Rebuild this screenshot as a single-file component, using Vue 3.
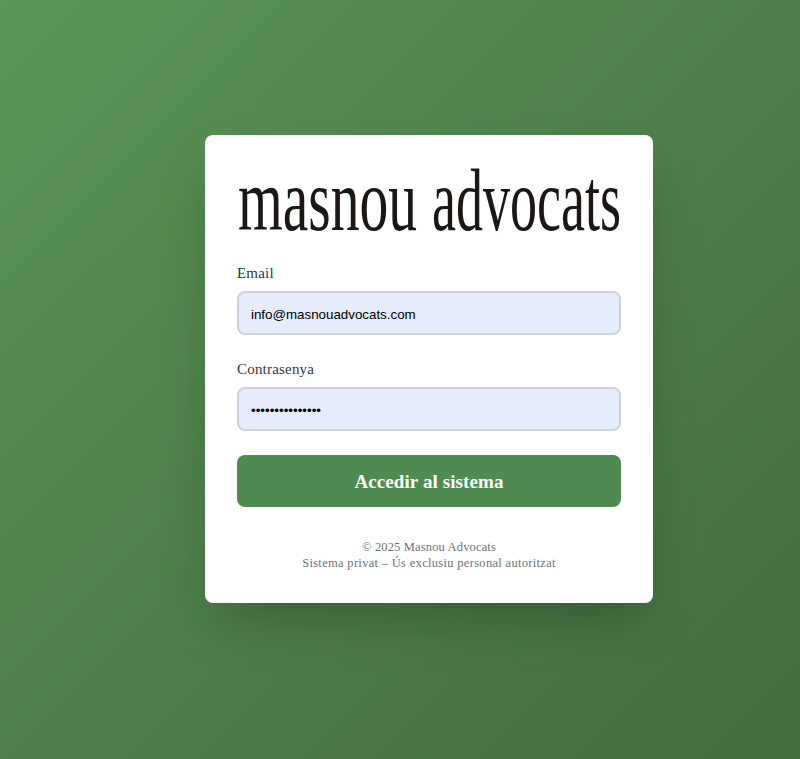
<script setup>
const email = 'info@masnouadvocats.com'
const password = 'masnouadvocats1'
</script>

<template>
  <main class="page">
    <section class="card">
      <svg class="logo" viewBox="0 0 384 72" role="img" aria-label="masnou advocats">
        <text class="logo-text" transform="translate(1 63) scale(0.654 1)">masnou</text>
        <text class="logo-text" transform="translate(195 63) scale(0.614 1)">advocats</text>
      </svg>
      <form class="form" @submit.prevent>
        <div class="field">
          <label class="label" for="email">Email</label>
          <input id="email" class="input" type="email" :value="email" />
        </div>
        <div class="field">
          <label class="label" for="password">Contrasenya</label>
          <input id="password" class="input" type="password" :value="password" />
        </div>
        <button class="submit" type="submit">Accedir al sistema</button>
      </form>
      <footer class="footer">
        <div>© 2025 Masnou Advocats</div>
        <div class="footer-note">Sistema privat – Ús exclusiu personal autoritzat</div>
      </footer>
    </section>
  </main>
</template>

<style>
html, body { margin: 0; padding: 0; }
</style>

<style scoped>
.page {
  box-sizing: border-box;
  height: 759px;
  padding-top: 135px;
  display: flex;
  justify-content: center;
  align-items: flex-start;
  padding-left: 58px;
  background: linear-gradient(135deg, #5a9655 0%, #426c40 100%);
  font-family: "Liberation Serif", "DejaVu Serif", serif;
}
.card {
  box-sizing: border-box;
  width: 448px;
  height: 468px;
  padding: 32px;
  background: #fff;
  border-radius: 8px;
  box-shadow: 0 25px 50px -12px rgba(0, 0, 0, 0.25);
}
.logo {
  display: block;
  width: 384px;
  height: 72px;
  margin-bottom: 24px;
  overflow: visible;
}
.logo-text {
  font-family: "Liberation Serif", serif;
  font-size: 88px;
  fill: #1c1614;
}
.form {
  display: flex;
  flex-direction: column;
  gap: 24px;
}
.label {
  display: block;
  margin-bottom: 8px;
  font-size: 15px;
  line-height: 20px;
  letter-spacing: 0.2px;
  color: #2f3744;
}
.input {
  display: block;
  box-sizing: border-box;
  width: 100%;
  height: 44px;
  padding: 2px 12px 0;
  border: 2px solid #ccd1dc;
  border-radius: 8px;
  background: #e5ecfb;
  color: #000;
  font-family: "Liberation Sans", Arial, sans-serif;
  font-size: 13.333px;
  outline: none;
}
.submit {
  height: 52px;
  padding: 2px 0 0;
  border: 0;
  border-radius: 8px;
  background: #4f8a50;
  color: #fff;
  font-family: "Liberation Serif", serif;
  font-size: 19px;
  font-weight: 700;
  letter-spacing: 0.1px;
}
.footer {
  margin-top: 32px;
  text-align: center;
  font-size: 12.5px;
  line-height: 16px;
  letter-spacing: 0.15px;
  color: #6b7280;
}
.footer-note {
  letter-spacing: 0.31px;
}
</style>
